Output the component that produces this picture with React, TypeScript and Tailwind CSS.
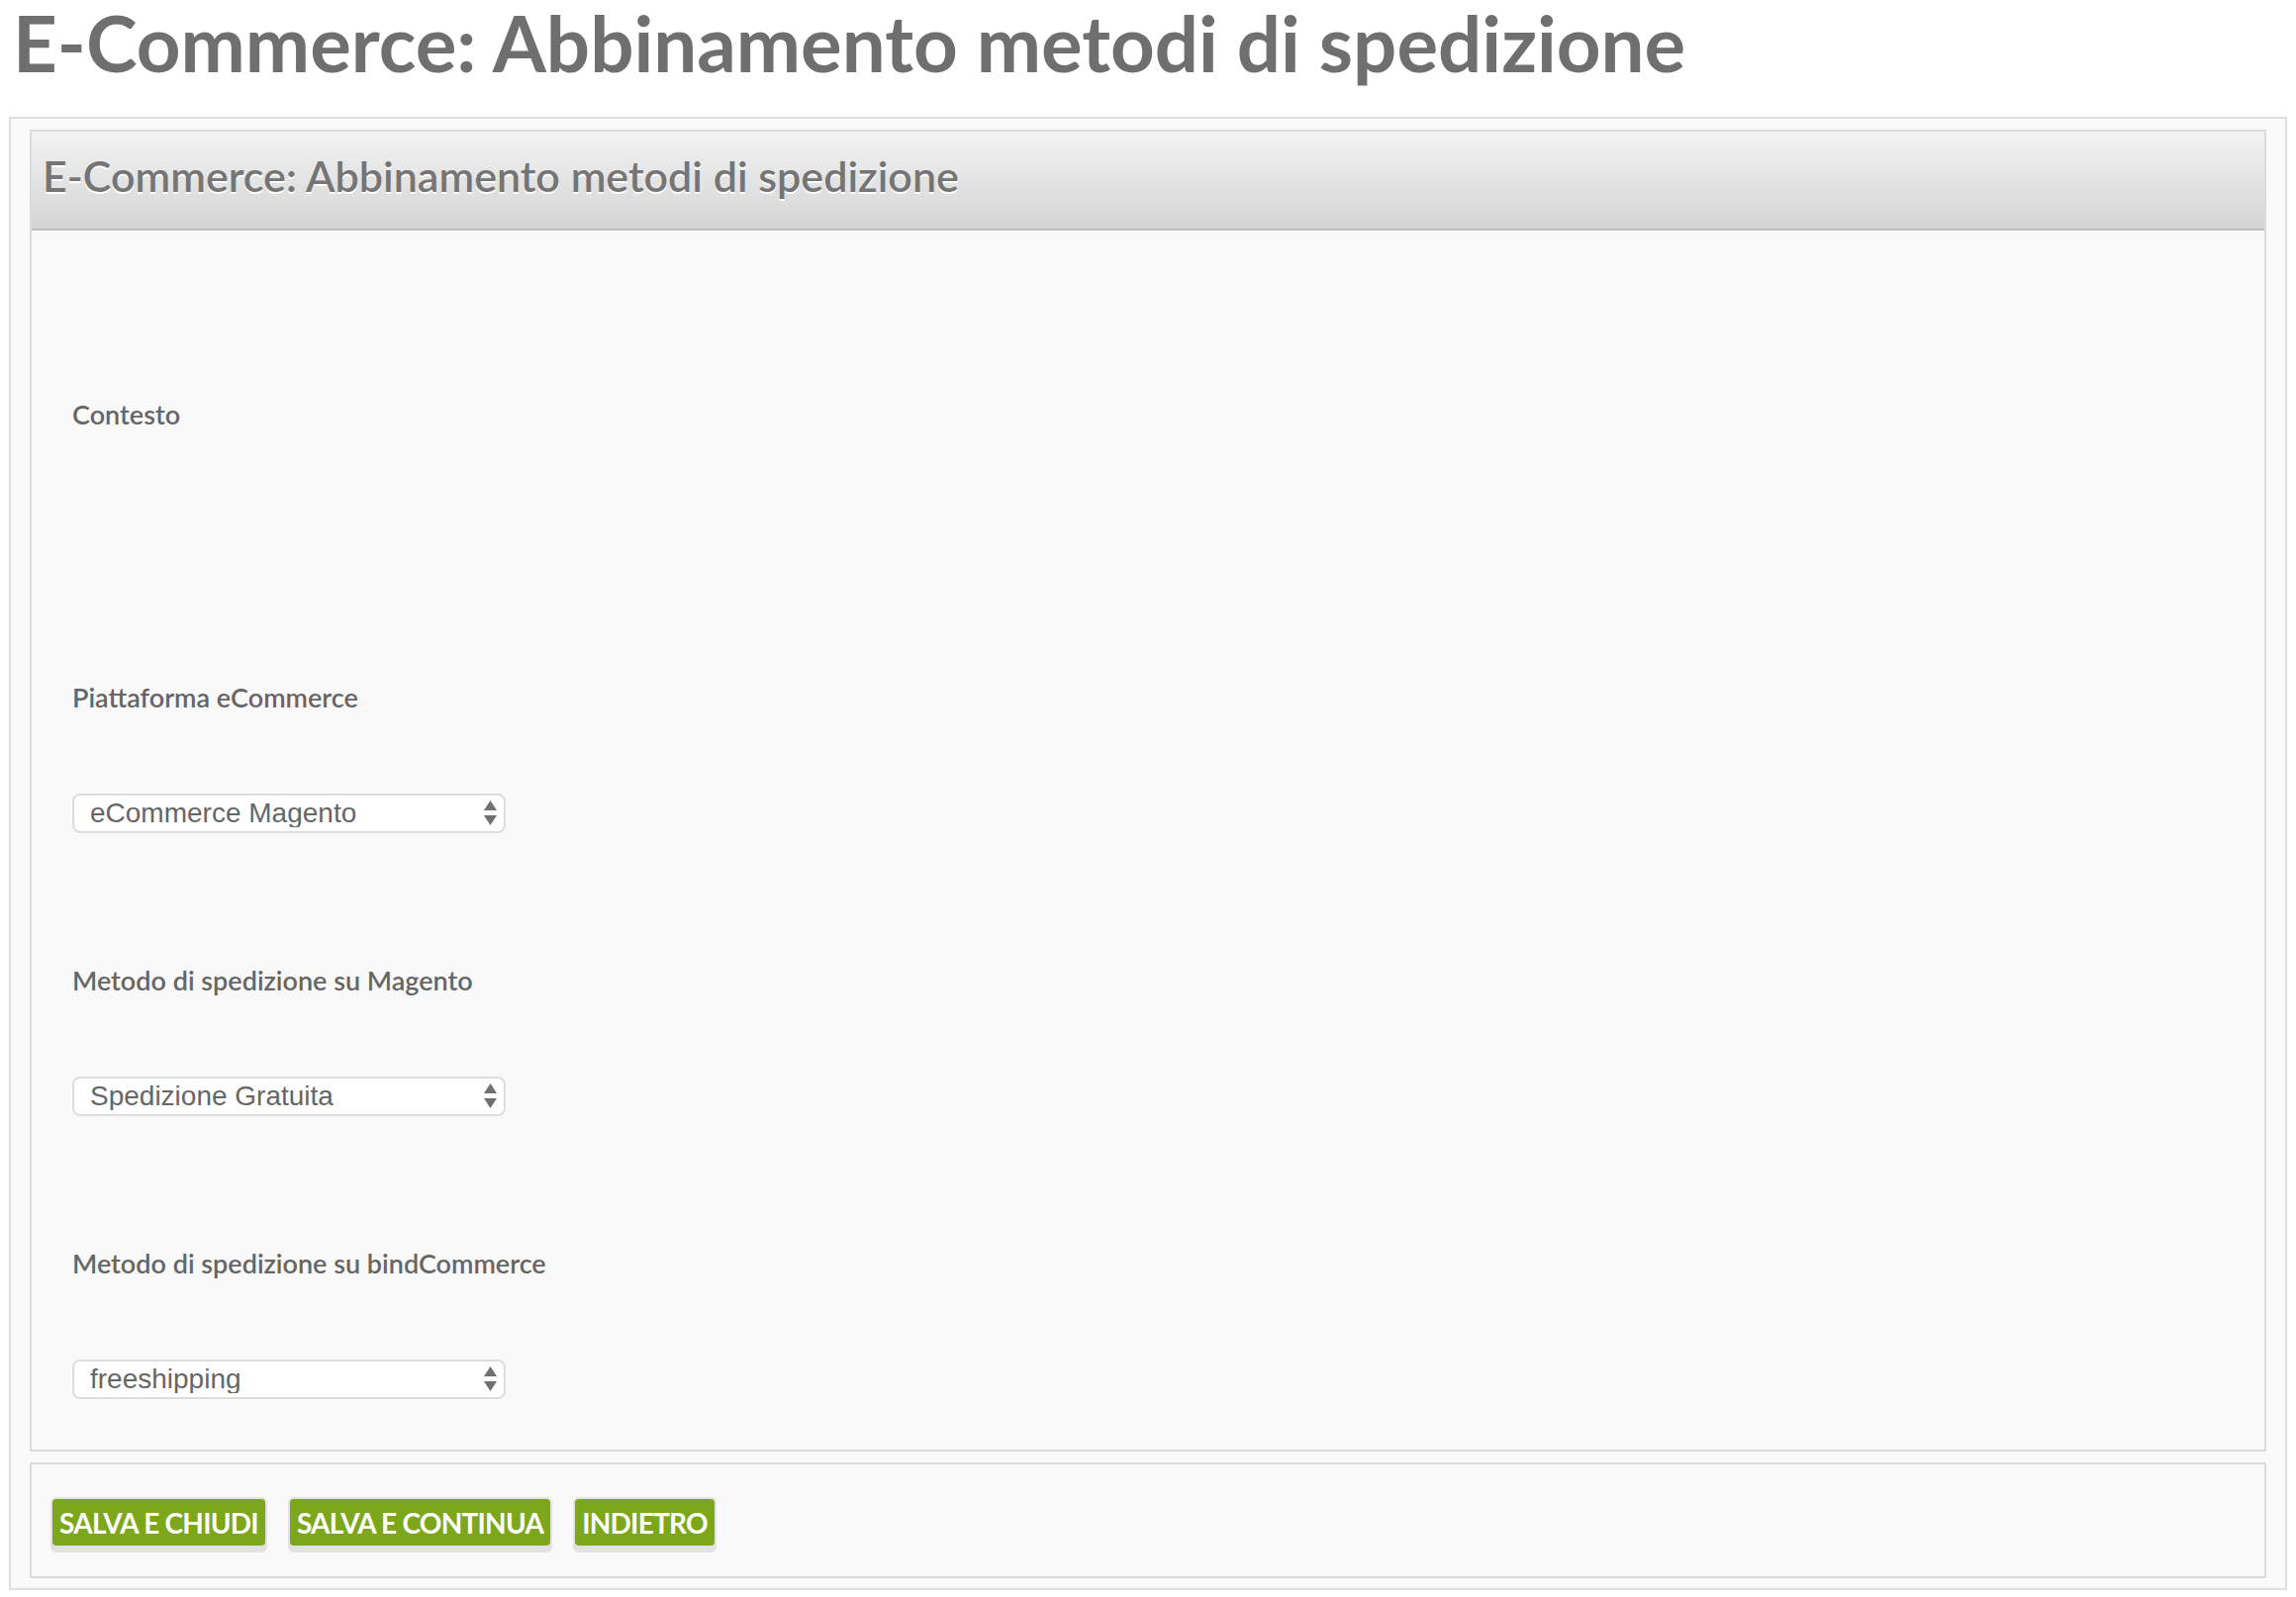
const FIELDS = [
  { label: 'Contesto', value: null },
  { label: 'Piattaforma eCommerce', value: 'eCommerce Magento' },
  { label: 'Metodo di spedizione su Magento', value: 'Spedizione Gratuita' },
  { label: 'Metodo di spedizione su bindCommerce', value: 'freeshipping' },
]

const BUTTONS = ['Salva e chiudi', 'Salva e continua', 'Indietro']

function SelectBox({ value }: { value: string }) {
  return (
    <div className="relative h-[40px] w-[438px]">
      <select
        defaultValue={value}
        className="h-full w-full appearance-none rounded-[8px] border-2 border-[#dddddd] bg-white pl-[16px] font-['Liberation_Sans',Arial,sans-serif] text-[28px] leading-none text-[#666666] outline-none"
      >
        <option value={value}>{value}</option>
      </select>
      <svg
        className="pointer-events-none absolute right-[9px] top-[7px]"
        width="13"
        height="26"
        viewBox="0 0 13 26"
      >
        <path d="M6.5 0 L13 10 L0 10 Z" fill="#707070" />
        <path d="M0 15 L13 15 L6.5 25 Z" fill="#707070" />
      </svg>
    </div>
  )
}

export default function App() {
  return (
    <div className="min-h-screen bg-white font-['Lato',sans-serif] text-[#6f6f6f]">
      <h1 className="pl-[13px] text-[78px] font-bold leading-[86px]">
        E-Commerce: Abbinamento metodi di spedizione
      </h1>

      <div className="mx-[9px] mt-[32px] border-2 border-[#e0e0e0] bg-[#fafafa] px-[19px] pb-[10px] pt-[11px]">
        <div className="border-2 border-[#dcdcdc] bg-[#f9f9f9]">
          {/* panel header */}
          <div className="h-[100px] border-b-2 border-[#bdbdbd] bg-gradient-to-b from-[#f3f3f3] to-[#d5d5d5] pl-[11px] pt-[19px]">
            <h2 className="text-[43px] font-semibold leading-[52px] text-[#757575] [text-shadow:0_2px_0_#ffffff]">
              E-Commerce: Abbinamento metodi di spedizione
            </h2>
          </div>

          <div className="flex flex-col gap-[129px] pb-[51px] pl-[41px] pt-[166px]">
            {FIELDS.map((f) => (
              <div key={f.label} className="flex flex-col">
                <label className="h-[40px] text-[27px] font-semibold leading-[40px] text-[#666666]">
                  {f.label}
                </label>
                <div className="mt-[77px] h-[40px]">
                  {f.value && <SelectBox value={f.value} />}
                </div>
              </div>
            ))}
          </div>
        </div>

        <div className="mt-[11px] flex gap-[25px] border-2 border-[#dcdcdc] bg-[#f9f9f9] pb-[31px] pl-[21px] pt-[35px]">
          {BUTTONS.map((b) => (
            <button
              key={b}
              className="flex h-[47px] items-center rounded-[4px] bg-[#7da71b] px-[7px] text-[28px] font-bold uppercase leading-none tracking-[-0.75px] text-white shadow-[0_0_0_2px_#e2e2e2,0_5px_0_2px_#e2e2e2]"
            >
              {b}
            </button>
          ))}
        </div>
      </div>
    </div>
  )
}
